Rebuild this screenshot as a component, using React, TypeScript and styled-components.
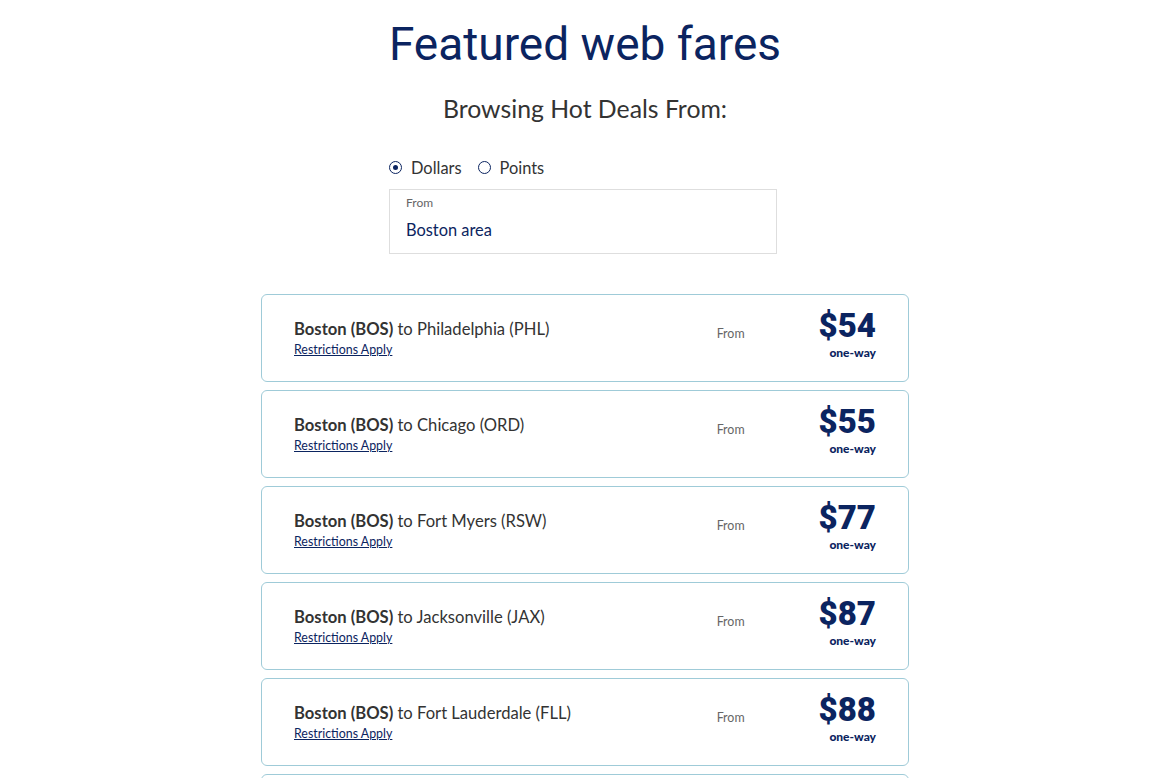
import React from 'react';
import styled, { createGlobalStyle } from 'styled-components';

const GlobalStyle = createGlobalStyle`
  body {
    margin: 0;
    background: #ffffff;
    font-family: 'Lato', 'Noto Sans', sans-serif;
    color: #333333;
  }
`;

const Page = styled.div`
  display: flex;
  flex-direction: column;
  align-items: center;
  padding-top: 16px;
`;

const Title = styled.h1`
  margin: 0;
  font-family: 'Roboto', 'DejaVu Sans Condensed', sans-serif;
  font-weight: 400;
  font-size: 46px;
  line-height: 56px;
  color: #0b2460;
`;

const Subtitle = styled.h2`
  margin: 21px 0 0;
  font-weight: 400;
  font-size: 24.8px;
  line-height: 32px;
  color: #333333;
`;

const SearchBlock = styled.div`
  width: 388px;
  margin: 30px 4px 0 0;
  display: flex;
  flex-direction: column;
  gap: 10px;
`;

const RadioRow = styled.div`
  display: flex;
  align-items: center;
  gap: 16px;
  height: 24px;
`;

const RadioLabel = styled.label`
  display: flex;
  align-items: center;
  gap: 9px;
  font-size: 16.4px;
  color: #333333;
`;

const RadioDot = styled.span<{ $checked?: boolean }>`
  width: 13px;
  height: 13px;
  box-sizing: border-box;
  border: 1px solid #0b2460;
  border-radius: 50%;
  display: flex;
  align-items: center;
  justify-content: center;
  &::after {
    content: '';
    width: 5px;
    height: 5px;
    border-radius: 50%;
    background: ${p => (p.$checked ? '#0b2460' : 'transparent')};
  }
`;

const InputBox = styled.div`
  height: 65px;
  box-sizing: border-box;
  border: 1px solid #dedede;
  padding: 5px 16px 0;
  display: flex;
  flex-direction: column;
`;

const InputLabel = styled.span`
  font-size: 12px;
  line-height: 16px;
  color: #666666;
`;

const InputValue = styled.span`
  margin-top: 9px;
  font-size: 16.4px;
  line-height: 20px;
  color: #0b2460;
`;

const FareList = styled.div`
  width: 648px;
  margin-top: 40px;
  display: flex;
  flex-direction: column;
  gap: 8px;
`;

const FareCard = styled.div`
  height: 88px;
  box-sizing: border-box;
  border: 1px solid #9fcbd8;
  border-radius: 6px;
  padding: 0 32px;
  display: flex;
  align-items: center;
`;

const RouteInfo = styled.div`
  flex: 1;
  display: flex;
  flex-direction: column;
  gap: 3px;
`;

const Route = styled.span`
  font-size: 16.6px;
  line-height: 20px;
  color: #333333;
  strong {
    font-weight: 700;
  }
`;

const Restrictions = styled.a`
  font-size: 12.4px;
  line-height: 16px;
  color: #0b2460;
  text-decoration: underline;
  cursor: pointer;
`;

const FromText = styled.span`
  font-size: 12.4px;
  color: #666666;
  margin: 0 74px 10px 0;
`;

const PriceBox = styled.div`
  display: flex;
  flex-direction: column;
  align-items: flex-end;
  margin-bottom: 6px;
`;

const Price = styled.span`
  font-family: 'Roboto', 'Lato', sans-serif;
  font-weight: 900;
  font-size: 33px;
  line-height: 32px;
  color: #0b2460;
`;

const OneWay = styled.span`
  margin-top: 4px;
  font-size: 12px;
  font-weight: 900;
  line-height: 14px;
  color: #0b2460;
`;

const fares = [
  { to: 'Philadelphia (PHL)', price: 54 },
  { to: 'Chicago (ORD)', price: 55 },
  { to: 'Fort Myers (RSW)', price: 77 },
  { to: 'Jacksonville (JAX)', price: 87 },
  { to: 'Fort Lauderdale (FLL)', price: 88 },
  { to: 'Orlando (MCO)', price: 89 },
];

const App: React.FC = () => {
  return (
    <>
      <GlobalStyle />
      <Page>
        <Title>Featured web fares</Title>
        <Subtitle>Browsing Hot Deals From:</Subtitle>
        <SearchBlock>
          <RadioRow>
            <RadioLabel>
              <RadioDot $checked />
              Dollars
            </RadioLabel>
            <RadioLabel>
              <RadioDot />
              Points
            </RadioLabel>
          </RadioRow>
          <InputBox>
            <InputLabel>From</InputLabel>
            <InputValue>Boston area</InputValue>
          </InputBox>
        </SearchBlock>
        <FareList>
          {fares.map(f => (
            <FareCard key={f.to}>
              <RouteInfo>
                <Route>
                  <strong>Boston (BOS)</strong> to {f.to}
                </Route>
                <Restrictions>Restrictions Apply</Restrictions>
              </RouteInfo>
              <FromText>From</FromText>
              <PriceBox>
                <Price>${f.price}</Price>
                <OneWay>one-way</OneWay>
              </PriceBox>
            </FareCard>
          ))}
        </FareList>
      </Page>
    </>
  );
};

export default App;
